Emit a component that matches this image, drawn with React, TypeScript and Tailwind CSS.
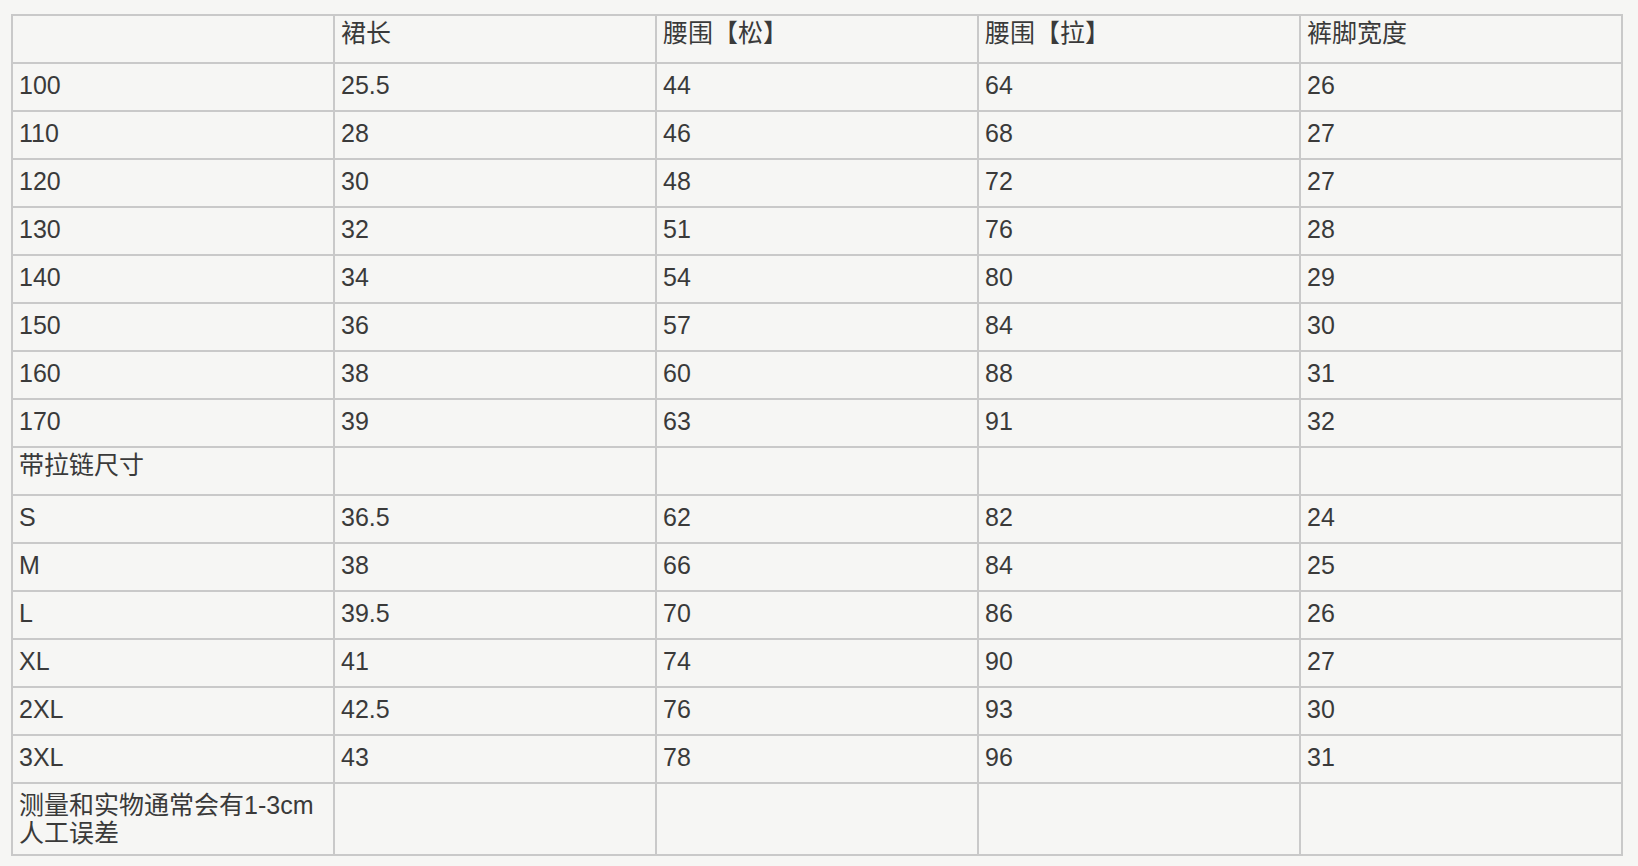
const header = ["", "裙长", "腰围【松】", "腰围【拉】", "裤脚宽度"];

const kidsRows = [
	["100", "25.5", "44", "64", "26"],
	["110", "28", "46", "68", "27"],
	["120", "30", "48", "72", "27"],
	["130", "32", "51", "76", "28"],
	["140", "34", "54", "80", "29"],
	["150", "36", "57", "84", "30"],
	["160", "38", "60", "88", "31"],
	["170", "39", "63", "91", "32"],
];

const zipRows = [
	["S", "36.5", "62", "82", "24"],
	["M", "38", "66", "84", "25"],
	["L", "39.5", "70", "86", "26"],
	["XL", "41", "74", "90", "27"],
	["2XL", "42.5", "76", "93", "30"],
	["3XL", "43", "78", "96", "31"],
];

// cjk-only rows sit a few px higher than the digit rows in the screenshot
function Row({ cells, cjk = false }: { cells: string[]; cjk?: boolean }) {
	return (
		<tr className="h-[48px]">
			{cells.map((c, i) => (
				<td
					key={i}
					className={`border-r-2 border-b-2 border-[#c9c9c9] px-[6px] align-top leading-[28px] ${
						cjk ? "pt-[3px]" : "pt-[7px]"
					}`}
				>
					{c}
				</td>
			))}
		</tr>
	);
}

export default function App() {
	return (
		<div
			className="min-h-screen bg-[#f6f6f4] pt-[14px] pl-[11px] text-[25px] text-[#3a3a3a]"
			style={{
				fontFamily: '"Liberation Sans", "Noto Sans CJK SC", sans-serif',
			}}
		>
			<table className="w-[1612px] table-fixed border-separate border-spacing-0 border-t-2 border-l-2 border-[#c9c9c9]">
				<tbody>
					<Row cells={header} cjk />
					{kidsRows.map((r) => (
						<Row key={r[0]} cells={r} />
					))}
					<Row cells={["带拉链尺寸", "", "", "", ""]} cjk />
					{zipRows.map((r) => (
						<Row key={r[0]} cells={r} />
					))}
					<tr className="h-[72px]">
						<td className="border-r-2 border-b-2 border-[#c9c9c9] px-[6px] pt-[7px] align-top leading-[28px]">
							测量和实物通常会有1-3cm
							<br />
							人工误差
						</td>
						<td className="border-r-2 border-b-2 border-[#c9c9c9]" />
						<td className="border-r-2 border-b-2 border-[#c9c9c9]" />
						<td className="border-r-2 border-b-2 border-[#c9c9c9]" />
						<td className="border-r-2 border-b-2 border-[#c9c9c9]" />
					</tr>
				</tbody>
			</table>
		</div>
	);
}
